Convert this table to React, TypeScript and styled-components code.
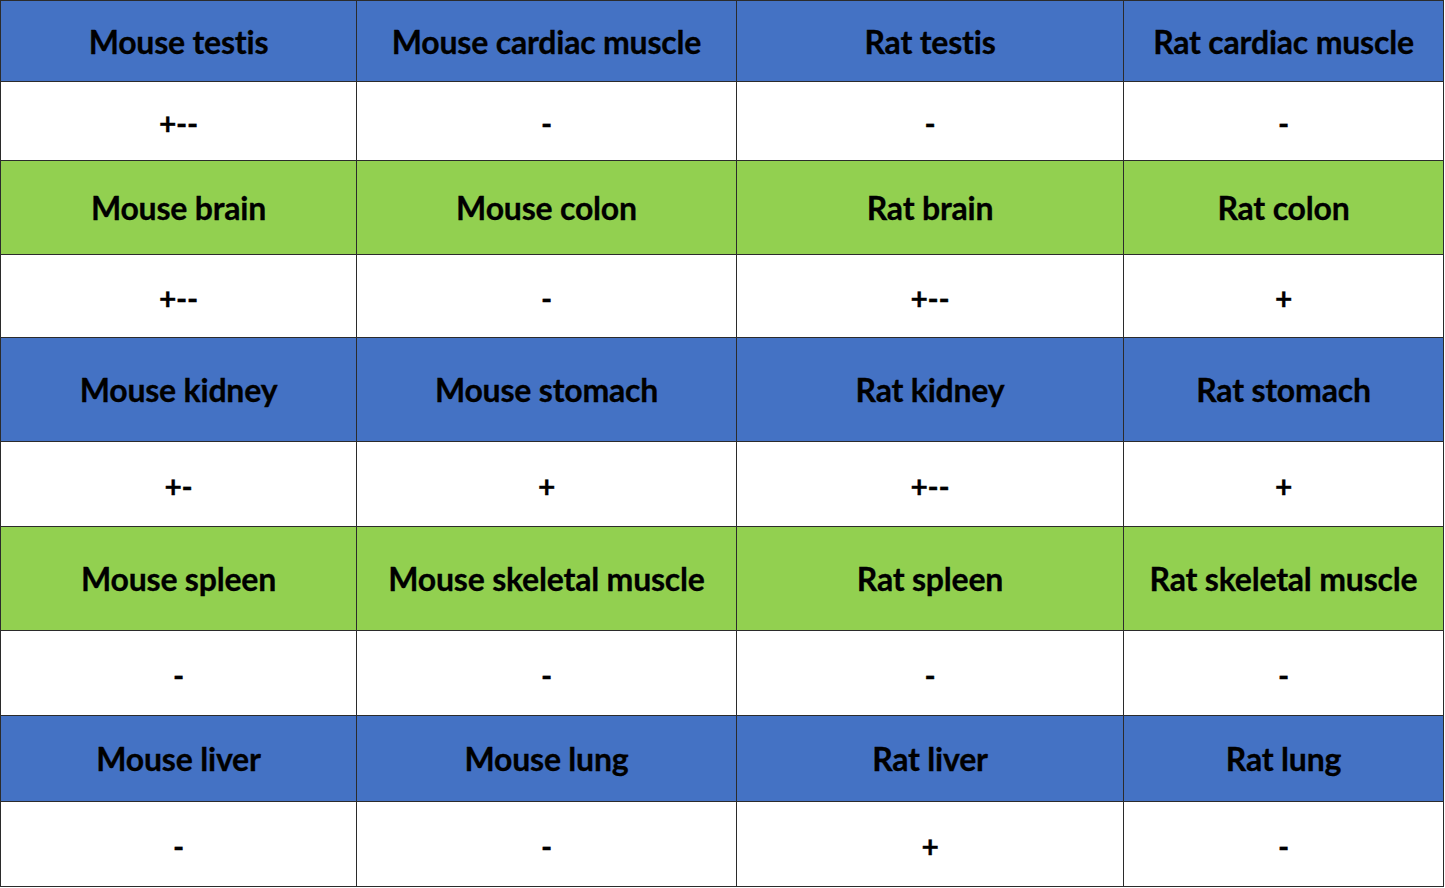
import React from "react";
import styled, { createGlobalStyle } from "styled-components";

const Global = createGlobalStyle`
  html, body { margin: 0; padding: 0; background: #ffffff; }
  body { font-family: Lato, "Open Sans", "Liberation Sans", sans-serif; }
`;

const Grid = styled.div`
  display: grid;
  grid-template-columns: 355px 379px 386px 319px;
  grid-template-rows: 80px 78px 93px 82px 103px 84px 103px 84px 85px 84px;
  gap: 1px;
  padding: 1px;
  width: max-content;
  background: #2b2b2b;
`;

type Tone = "blue" | "green" | "white";
const bg: Record<Tone, string> = {
  blue: "#4472c4",
  green: "#92d050",
  white: "#ffffff",
};

const Cell = styled.div<{ $tone: Tone }>`
  display: flex;
  align-items: center;
  justify-content: center;
  box-sizing: border-box;
  padding-top: ${(p) => (p.$tone === "white" ? "4px" : "0")};
  background: ${(p) => bg[p.$tone]};
  color: #000;
  font-weight: 700;
  font-size: ${(p) => (p.$tone === "white" ? "30px" : "32px")};
  letter-spacing: -0.2px;
  white-space: nowrap;
  -webkit-text-stroke: 0.3px #000;
`;

const rows: { tone: Tone; cells: string[] }[] = [
  { tone: "blue", cells: ["Mouse testis", "Mouse cardiac muscle", "Rat testis", "Rat cardiac muscle"] },
  { tone: "white", cells: ["+--", "-", "-", "-"] },
  { tone: "green", cells: ["Mouse brain", "Mouse colon", "Rat brain", "Rat colon"] },
  { tone: "white", cells: ["+--", "-", "+--", "+"] },
  { tone: "blue", cells: ["Mouse kidney", "Mouse stomach", "Rat kidney", "Rat stomach"] },
  { tone: "white", cells: ["+-", "+", "+--", "+"] },
  { tone: "green", cells: ["Mouse spleen", "Mouse skeletal muscle", "Rat spleen", "Rat skeletal muscle"] },
  { tone: "white", cells: ["-", "-", "-", "-"] },
  { tone: "blue", cells: ["Mouse liver", "Mouse lung", "Rat liver", "Rat lung"] },
  { tone: "white", cells: ["-", "-", "+", "-"] },
];

export default function App() {
  return (
    <>
      <Global />
      <Grid>
        {rows.map((r, i) =>
          r.cells.map((c, j) => (
            <Cell key={`${i}-${j}`} $tone={r.tone}>
              {c}
            </Cell>
          ))
        )}
      </Grid>
    </>
  );
}
